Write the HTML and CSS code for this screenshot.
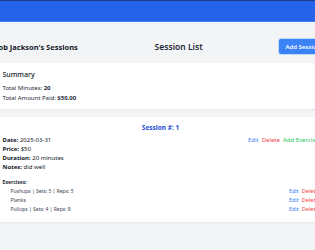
FILE: index.html
```html
<!DOCTYPE html>
<html lang="en">
<head>
    <meta charset="UTF-8">
    <meta name="viewport" content="width=device-width, initial-scale=1.0">
    <title>Sessions</title>
    <link rel="stylesheet" href="styles.css">
</head>
<body>
    <nav class="topbar"></nav>

    <div class="container">
        <div class="page-header">
            <h1 class="client-name">Bob Jackson's Sessions</h1>
            <h2 class="page-title">Session List</h2>
            <button class="btn-add">Add Session</button>
        </div>

        <div class="card summary">
            <h3 class="summary-title">Summary</h3>
            <p class="summary-line">Total Minutes: <b>20</b></p>
            <p class="summary-line">Total Amount Paid: <b>$50.00</b></p>
        </div>

        <div class="card session">
            <h3 class="session-title">Session #: 1</h3>
            <div class="session-body">
                <div class="session-info">
                    <p><b>Date:</b> 2025-03-31</p>
                    <p><b>Price:</b> $50</p>
                    <p><b>Duration:</b> 20 minutes</p>
                    <p><b>Notes:</b> did well</p>
                </div>
                <div class="actions">
                    <a class="link-edit">Edit</a>
                    <a class="link-delete">Delete</a>
                    <a class="link-add">Add Exercise</a>
                </div>
            </div>

            <h4 class="exercise-label">Exercises:</h4>
            <ul class="exercise-list">
                <li class="exercise">
                    <span>Pushups | Sets: 5 | Reps: 5</span>
                    <span class="actions"><a class="link-edit">Edit</a><a class="link-delete">Delete</a></span>
                </li>
                <li class="exercise">
                    <span>Planks</span>
                    <span class="actions"><a class="link-edit">Edit</a><a class="link-delete">Delete</a></span>
                </li>
                <li class="exercise">
                    <span>Pullups | Sets: 4 | Reps: 8</span>
                    <span class="actions"><a class="link-edit">Edit</a><a class="link-delete">Delete</a></span>
                </li>
            </ul>
        </div>
    </div>
</body>
</html>
```

FILE: styles.css
```css
body {
    font-family: 'Noto Sans', sans-serif;
    margin: 0;
    background: #f3f4f6;
    color: #111827;
    display: flex;
    flex-direction: column;
    align-items: center;
    height: 250px;
    overflow: hidden;
}

.topbar {
    align-self: stretch;
    height: 20px;
    background: #2563eb;
    border-top: 1px solid #1e3a8a;
    border-bottom: 1px solid #3b82f6;
}

.container {
    width: 338px;
    flex-shrink: 0;
}

.page-header {
    display: flex;
    justify-content: space-between;
    align-items: center;
    padding: 17px 0 9px 5px;
}

.client-name {
    margin: 0;
    font-size: 7.5px;
    font-weight: 700;
}

.page-title {
    margin: 0;
    font-size: 8.5px;
    font-weight: 600;
    color: #1f2937;
}

.btn-add {
    font-family: inherit;
    font-size: 6px;
    font-weight: 600;
    color: #ffffff;
    background: #3b82f6;
    border: none;
    border-radius: 2px;
    height: 15px;
    padding: 0 6px;
    box-shadow: 0 0 0 1px #bfdbfe;
}

.card {
    background: #ffffff;
    box-shadow: 0 1px 2px rgba(0, 0, 0, 0.06);
    padding: 6px 8px 6px 14px;
    margin-bottom: 8px;
}

.summary-title {
    margin: 0 0 3px 0;
    font-size: 7px;
    font-weight: 500;
    line-height: 11px;
}

.summary-line {
    margin: 0;
    font-size: 6px;
    line-height: 10px;
    color: #1f2937;
}

.session {
    padding-top: 6px;
    padding-bottom: 8px;
}

.session-title {
    margin: 0 0 3px 0;
    text-align: center;
    font-size: 6.5px;
    font-weight: 700;
    line-height: 10px;
    color: #1d4ed8;
}

.session-body {
    display: flex;
    justify-content: space-between;
}

.session-info p {
    margin: 0;
    font-size: 6px;
    line-height: 9px;
}

.actions {
    display: flex;
    gap: 3px;
    font-size: 6px;
    line-height: 9px;
    white-space: nowrap;
}

.link-edit {
    color: #3b82f6;
}

.link-delete {
    color: #ef4444;
}

.link-add {
    color: #22c55e;
}

.exercise-label {
    margin: 6px 0 1px 0;
    font-size: 5px;
    font-weight: 700;
    line-height: 8px;
    color: #1f2937;
}

.exercise-list {
    list-style: none;
    margin: 0;
    padding: 0 0 0 8px;
}

.exercise {
    display: flex;
    justify-content: space-between;
    font-size: 5px;
    line-height: 9px;
    color: #374151;
}

.exercise .actions {
    font-size: 5.5px;
}
```
